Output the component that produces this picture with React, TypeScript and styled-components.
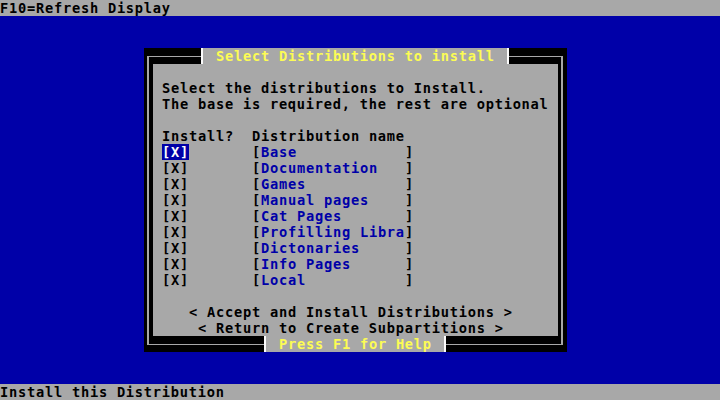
import React from "react";
import styled, { createGlobalStyle } from "styled-components";

// VGA text-mode palette
const BLUE = "#0000a8";
const GRAY = "#a8a8a8";
const BLACK = "#000000";
const WHITE = "#fcfcfc";
const YELLOW = "#fcfc54";

const distributions = [
  "Base",
  "Documentation",
  "Games",
  "Manual pages",
  "Cat Pages",
  "Profilling Libra",
  "Dictonaries",
  "Info Pages",
  "Local",
];

const GlobalStyle = createGlobalStyle`
  html, body {
    margin: 0;
    padding: 0;
    background: ${BLUE};
  }
`;

// 80x25 text screen, each cell 9x16
const Screen = styled.div`
  width: 720px;
  height: 400px;
  display: grid;
  grid-template-rows: 16px 1fr 16px;
  font-family: "DejaVu Sans Mono", "Liberation Mono", monospace;
  font-size: 13.7px;
  letter-spacing: 0.75px;
  font-weight: bold;
  line-height: 16px;
  white-space: pre;
  overflow: hidden;
`;

const StatusBar = styled.div`
  background: ${GRAY};
  color: ${BLACK};
  height: 16px;
`;

const Desktop = styled.div`
  background: ${BLUE};
  padding: 32px 0 0 144px;
`;

const Dialog = styled.div`
  position: relative;
  box-sizing: border-box;
  width: 423px;
  height: 304px;
  background: ${BLACK};
  padding: 8px 4px 7px 3px;
`;

const Frame = styled.div`
  box-sizing: border-box;
  height: 100%;
  border: solid ${GRAY};
  border-width: 1px 2px;
  padding: 7px 3px 8px 4px;
`;

const Body = styled.div`
  box-sizing: border-box;
  height: 100%;
  background: ${GRAY};
  color: ${BLACK};
  padding: 16px 0 0 9px;
  display: flex;
  flex-direction: column;
`;

const EdgeLabel = styled.div<{ $left: number; $top: number }>`
  position: absolute;
  left: ${(p) => p.$left}px;
  top: ${(p) => p.$top}px;
  height: 16px;
  background: ${GRAY};
  color: ${YELLOW};
  border-left: 2px solid ${WHITE};
  border-right: 2px solid ${WHITE};
  padding: 0 12px 0 13px;
`;

const Line = styled.div`
  height: 16px;
`;

const Gap = styled.div<{ $rows: number }>`
  height: ${(p) => p.$rows * 16}px;
  flex: none;
`;

const Table = styled.div`
  display: grid;
  grid-template-columns: 90px 9px 144px 9px;
  grid-auto-rows: 16px;
`;

const Heading = styled.span<{ $wide?: boolean }>`
  grid-column: ${(p) => (p.$wide ? "2 / 5" : "auto")};
`;

const Check = styled.span<{ $active?: boolean }>`
  justify-self: start;
  background: ${(p) => (p.$active ? BLUE : "transparent")};
  color: ${(p) => (p.$active ? WHITE : BLACK)};
`;

const Name = styled.span`
  color: ${BLUE};
`;

const Action = styled.div<{ $col: number }>`
  height: 16px;
  padding-left: ${(p) => p.$col * 9}px;
`;

export default function App() {
  return (
    <>
      <GlobalStyle />
      <Screen>
        <StatusBar>F10=Refresh Display</StatusBar>
        <Desktop>
          <Dialog>
            <Frame>
              <Body>
                <Line>Select the distributions to Install.</Line>
                <Line>The base is required, the rest are optional</Line>
                <Gap $rows={1} />
                <Table>
                  <Heading>Install?</Heading>
                  <Heading $wide>Distribution name</Heading>
                  {distributions.map((d, i) => (
                    <React.Fragment key={d}>
                      <Check $active={i === 0}>[X]</Check>
                      <span>[</span>
                      <Name>{d}</Name>
                      <span>]</span>
                    </React.Fragment>
                  ))}
                </Table>
                <Gap $rows={1} />
                <Action $col={3}>{"< Accept and Install Distributions >"}</Action>
                <Action $col={4}>{"< Return to Create Subpartitions >"}</Action>
              </Body>
            </Frame>
            <EdgeLabel $left={57} $top={0}>
              Select Distributions to install
            </EdgeLabel>
            <EdgeLabel $left={120} $top={288}>
              Press F1 for Help
            </EdgeLabel>
          </Dialog>
        </Desktop>
        <StatusBar>Install this Distribution</StatusBar>
      </Screen>
    </>
  );
}
